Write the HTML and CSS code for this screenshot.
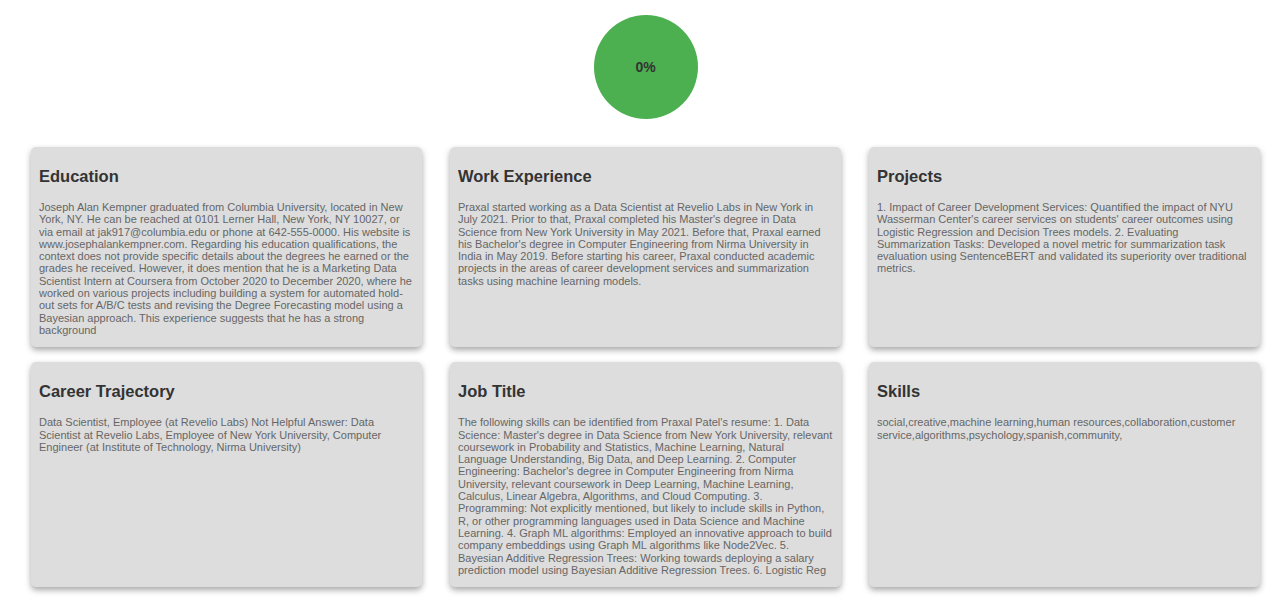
FILE: index.html
```html
<!DOCTYPE html>
<html lang="en">
<head>
<meta charset="utf-8">
<title>Resume Insights</title>
<link rel="stylesheet" href="styles.css">
</head>
<body>
<div class="page">
  <div class="progress-wrap">
    <div class="progress-circle"><span class="progress-text">0%</span></div>
  </div>
  <div class="grid">
    <div class="card">
      <h2 class="card-title">Education</h2>
      <p class="card-text">Joseph Alan Kempner graduated from Columbia University, located in New York, NY. He can be reached at 0101 Lerner Hall, New York, NY 10027, or via email at jak917@columbia.edu or phone at 642-555-0000. His website is www.josephalankempner.com. Regarding his education qualifications, the context does not provide specific details about the degrees he earned or the grades he received. However, it does mention that he is a Marketing Data Scientist Intern at Coursera from October 2020 to December 2020, where he worked on various projects including building a system for automated hold-out sets for A/B/C tests and revising the Degree Forecasting model using a Bayesian approach. This experience suggests that he has a strong background</p>
    </div>
    <div class="card">
      <h2 class="card-title">Work Experience</h2>
      <p class="card-text">Praxal started working as a Data Scientist at Revelio Labs in New York in July 2021. Prior to that, Praxal completed his Master's degree in Data Science from New York University in May 2021. Before that, Praxal earned his Bachelor's degree in Computer Engineering from Nirma University in India in May 2019. Before starting his career, Praxal conducted academic projects in the areas of career development services and summarization tasks using machine learning models.</p>
    </div>
    <div class="card">
      <h2 class="card-title">Projects</h2>
      <p class="card-text">1. Impact of Career Development Services: Quantified the impact of NYU Wasserman Center's career services on students' career outcomes using Logistic Regression and Decision Trees models. 2. Evaluating Summarization Tasks: Developed a novel metric for summarization task evaluation using SentenceBERT and validated its superiority over traditional metrics.</p>
    </div>
    <div class="card">
      <h2 class="card-title">Career Trajectory</h2>
      <p class="card-text">Data Scientist, Employee (at Revelio Labs) Not Helpful Answer: Data Scientist at Revelio Labs, Employee of New York University, Computer Engineer (at Institute of Technology, Nirma University)</p>
    </div>
    <div class="card">
      <h2 class="card-title">Job Title</h2>
      <p class="card-text">The following skills can be identified from Praxal Patel's resume: 1. Data Science: Master's degree in Data Science from New York University, relevant coursework in Probability and Statistics, Machine Learning, Natural Language Understanding, Big Data, and Deep Learning. 2. Computer Engineering: Bachelor's degree in Computer Engineering from Nirma University, relevant coursework in Deep Learning, Machine Learning, Calculus, Linear Algebra, Algorithms, and Cloud Computing. 3. Programming: Not explicitly mentioned, but likely to include skills in Python, R, or other programming languages used in Data Science and Machine Learning. 4. Graph ML algorithms: Employed an innovative approach to build company embeddings using Graph ML algorithms like Node2Vec. 5. Bayesian Additive Regression Trees: Working towards deploying a salary prediction model using Bayesian Additive Regression Trees. 6. Logistic Reg</p>
    </div>
    <div class="card">
      <h2 class="card-title">Skills</h2>
      <p class="card-text">social,creative,machine learning,human resources,collaboration,customer service,algorithms,psychology,spanish,community,</p>
    </div>
  </div>
</div>
</body>
</html>
```
FILE: styles.css
```css
html, body {
  margin: 0;
  padding: 0;
  background: #ffffff;
}

body {
  font-family: "Liberation Sans", Arial, sans-serif;
}

.page {
  padding: 15px 20px 14px 31px;
}

.progress-wrap {
  display: flex;
  justify-content: center;
  margin-bottom: 28px;
}

.progress-circle {
  width: 104px;
  height: 104px;
  border-radius: 50%;
  background: #4caf50;
  display: flex;
  align-items: center;
  justify-content: center;
}

.progress-text {
  font-size: 14px;
  font-weight: bold;
  color: #333333;
}

.grid {
  display: grid;
  grid-template-columns: repeat(3, 391px);
  column-gap: 28px;
  row-gap: 15px;
}

.card {
  background: #dddddd;
  border-radius: 5px;
  box-shadow: 0 3px 6px rgba(0, 0, 0, 0.35);
  padding: 9px 7px 11px 8px;
}

.card-title {
  margin: 11px 0 15px;
  font-size: 16.5px;
  font-weight: bold;
  color: #333333;
}

.card-text {
  margin: 0;
  font-size: 11px;
  line-height: 12.3px;
  color: #666666;
}
```
